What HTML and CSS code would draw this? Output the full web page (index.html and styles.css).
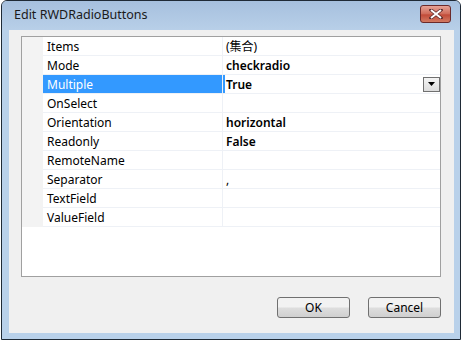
FILE: index.html
```html
<!DOCTYPE html>
<html lang="en">
<head>
<meta charset="UTF-8">
<title>Edit RWDRadioButtons</title>
<link rel="stylesheet" href="styles.css">
</head>
<body>

<!-- ===== WINDOW ===== -->
<div class="window">
  <div class="titleBar">
    <span class="titleText">Edit RWDRadioButtons</span>
    <div class="closeBtn">
      <svg width="14" height="10" viewBox="0 0 14 10">
        <path d="M2 1 L12 9 M12 1 L2 9" stroke="#5a2a2a" stroke-width="3.4" stroke-linecap="square"/>
        <path d="M2 1 L12 9 M12 1 L2 9" stroke="#ffffff" stroke-width="2"/>
      </svg>
    </div>
  </div>

  <div class="client">
    <!-- ===== PROPERTY GRID ===== -->
    <div class="propGrid">
      <div class="row"><div class="gutter"></div><div class="name">Items</div><div class="value">(集合)</div></div>
      <div class="row"><div class="gutter"></div><div class="name">Mode</div><div class="value changed">checkradio</div></div>
      <div class="row selected">
        <div class="gutter"></div>
        <div class="name">Multiple</div>
        <div class="value changed">True
          <span class="dropBtn"><svg width="7" height="4" viewBox="0 0 7 4"><path d="M0 0 H7 L3.5 4 Z" fill="#000"/></svg></span>
        </div>
      </div>
      <div class="row"><div class="gutter"></div><div class="name">OnSelect</div><div class="value"></div></div>
      <div class="row"><div class="gutter"></div><div class="name">Orientation</div><div class="value changed">horizontal</div></div>
      <div class="row"><div class="gutter"></div><div class="name">Readonly</div><div class="value changed">False</div></div>
      <div class="row"><div class="gutter"></div><div class="name">RemoteName</div><div class="value"></div></div>
      <div class="row"><div class="gutter"></div><div class="name">Separator</div><div class="value">,</div></div>
      <div class="row"><div class="gutter"></div><div class="name">TextField</div><div class="value"></div></div>
      <div class="row"><div class="gutter"></div><div class="name">ValueField</div><div class="value"></div></div>
    </div>

    <!-- ===== BUTTONS ===== -->
    <div class="footer">
      <button class="btn">OK</button>
      <button class="btn">Cancel</button>
    </div>
  </div>
</div>

</body>
</html>
```

FILE: styles.css
```css
body {
  margin: 0;
  padding-left: 1px;
  background: white;
  font-family: "Noto Sans", "Noto Sans CJK TC", sans-serif;
  font-size: 12px;
  color: #000;
}

/* ===== WINDOW ===== */
.window {
  width: 458px;
  height: 338px;
  border: 1px solid #1f2a36;
  border-radius: 6px 6px 0 0;
  background: #b9d1ea;
  display: flex;
  flex-direction: column;
  overflow: hidden;
}

.titleBar {
  height: 29px;
  background: linear-gradient(#a6c0de, #b8cfe8);
  display: flex;
  align-items: center;
  justify-content: space-between;
  padding: 0 9px 0 12px;
}

.titleText {
  font-size: 12.5px;
  color: #1a1a1a;
  margin-top: -3px;
}

.closeBtn {
  width: 29px;
  height: 16px;
  margin-top: -4px;
  border: 1px solid #6b2a2a;
  border-radius: 3px;
  background: linear-gradient(#e6a396, #cf6a58 50%, #c14a38 55%, #d27a62);
  display: flex;
  align-items: center;
  justify-content: center;
}

.client {
  flex: 1;
  margin: 0 6px 6px 7px;
  background: #f0f0f0;
  display: flex;
  flex-direction: column;
  padding: 6px 13px 0 12px;
}

/* ===== PROPERTY GRID ===== */
.propGrid {
  height: 239px;
  border: 1px solid #a0a0a0;
  background: white;
}

.row {
  display: flex;
  height: 18px;
  border-bottom: 1px solid #eef1f6;
  line-height: 19px;
}

.gutter {
  width: 21px;
  background: #f3f3f3;
  border-bottom: 1px solid #f3f3f3;
  margin-bottom: -1px;
}

.name {
  width: 175px;
  padding-left: 4px;
  border-right: 1px solid #eef1f6;
}

.value {
  flex: 1;
  padding-left: 3px;
  display: flex;
  align-items: center;
  justify-content: space-between;
}

.value.changed {
  font-weight: 600;
}

.selected .name {
  background: #3399ff;
  color: white;
}

.selected .value {
  box-shadow: inset 2px 0 0 #3399ff;
}

.dropBtn {
  width: 15px;
  height: 13px;
  border: 1px solid #707070;
  background: linear-gradient(#f4f4f4, #dcdcdc);
  display: flex;
  align-items: center;
  justify-content: center;
}

/* ===== BUTTONS ===== */
.footer {
  display: flex;
  justify-content: flex-end;
  gap: 18px;
  padding-top: 20px;
}

.btn {
  width: 73px;
  height: 21px;
  border: 1px solid #707070;
  border-radius: 3px;
  background: linear-gradient(#f2f2f2 45%, #dddddd 55%, #d0d0d0);
  font-family: "Noto Sans", sans-serif;
  font-size: 12px;
  padding: 0;
  color: #000;
}
```
